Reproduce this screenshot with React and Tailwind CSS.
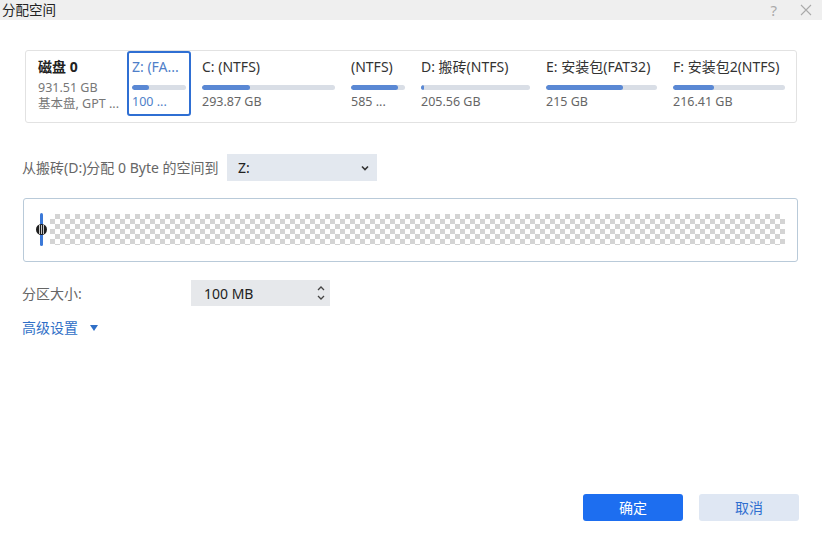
import React from 'react';

const partitions = [
  { name: 'Z: (FA...', size: '100 ...', fill: 31, w: 'w-[64px]', selected: true },
  { name: 'C: (NTFS)', size: '293.87 GB', fill: 36, w: 'w-[143px]' },
  { name: '(NTFS)', size: '585 ...', fill: 87, w: 'w-[64px]' },
  { name: 'D: 搬砖(NTFS)', size: '205.56 GB', fill: 3, w: 'w-[119px]' },
  { name: 'E: 安装包(FAT32)', size: '215 GB', fill: 69, w: 'w-[121px]' },
  { name: 'F: 安装包2(NTFS)', size: '216.41 GB', fill: 37, w: 'w-[122px]' },
];

const PartitionItem = ({ p }) => (
  <div
    className={`${p.w} h-[65px] shrink-0 rounded-[3px] border-2 px-[3px] pt-[4px] ${
      p.selected ? 'border-[#2f6fd3]' : 'border-transparent'
    }`}
  >
    <div
      className={`text-[14px] leading-[20px] whitespace-nowrap overflow-hidden ${
        p.selected ? 'text-[#4f7fc9]' : 'text-[#333]'
      }`}
    >
      {p.name}
    </div>
    <div className="mt-[8px] h-[5px] rounded-full bg-[#d9dee6] overflow-hidden">
      <div className="h-full rounded-full bg-[#5a88d4]" style={{ width: `${p.fill}%` }} />
    </div>
    <div
      className={`mt-[3px] text-[12.5px] leading-[18px] whitespace-nowrap ${
        p.selected ? 'text-[#4f7fc9]' : 'text-[#666]'
      }`}
    >
      {p.size}
    </div>
  </div>
);

export default function App() {
  return (
    <div
      className="w-[822px] h-[540px] bg-white flex flex-col text-[#333]"
      style={{ fontFamily: '"Noto Sans", "Noto Sans CJK SC", sans-serif' }}
    >
      {/* Title bar */}
      <div className="h-[20px] bg-[#efefef] flex items-center justify-between pl-[2px] pr-[7px]">
        <span className="text-[13.5px] leading-[18px] text-[#222]">分配空间</span>
        <div className="flex items-center gap-[23px] text-[#aaa]">
          <span className="text-[15px] leading-[18px]">?</span>
          <svg width="12" height="12" viewBox="0 0 12 12" className="mr-[3px]">
            <path d="M1 1 L11 11 M11 1 L1 11" stroke="#aaa" strokeWidth="1.1" />
          </svg>
        </div>
      </div>

      {/* Disk card */}
      <div className="mt-[30px] ml-[25px] w-[772px] h-[73px] rounded-[3px] border border-[#e2e2e2] flex">
        <div className="w-[101px] shrink-0 pl-[12px] pt-[6px]">
          <div className="text-[14px] leading-[20px] font-bold text-[#222]">磁盘 0</div>
          <div className="text-[12.5px] leading-[16px] text-[#777] mt-[3px]">931.51 GB</div>
          <div className="text-[12.5px] leading-[16px] text-[#777] whitespace-nowrap">基本盘, GPT ...</div>
        </div>
        <div className="flex gap-[6px]">
          {partitions.map((p) => (
            <PartitionItem key={p.name} p={p} />
          ))}
        </div>
      </div>

      {/* Source/target row */}
      <div className="mt-[31px] ml-[22px] flex items-center">
        <span className="text-[14px] text-[#666] w-[205px]">从搬砖(D:)分配 0 Byte 的空间到</span>
        <div className="w-[150px] h-[27px] bg-[#e3e8ef] flex items-center justify-between pl-[11px] pr-[7px]">
          <span className="text-[14px] text-[#222]">Z:</span>
          <svg width="10" height="10" viewBox="0 0 10 10">
            <path d="M2 3.5 L5 6.5 L8 3.5" fill="none" stroke="#333" strokeWidth="1.6" />
          </svg>
        </div>
      </div>

      {/* Slider */}
      <div className="mt-[17px] ml-[23px] w-[775px] h-[64px] rounded-[3px] border border-[#b9cad9] pt-[15px] pl-[26px] pr-[12px]">
        <div className="relative h-[31px] bg-[repeating-conic-gradient(#d4d4d4_0%_25%,#ffffff_0%_50%)] bg-size-[10px_10px]">
          <div className="absolute left-[-10px] top-[-1px] h-[33px] w-[3px] rounded-full bg-[#3b79d8]" />
          <div className="absolute left-[-14px] top-[10px] w-[11px] h-[11px] rounded-full bg-[#1e1e1e] flex items-center justify-center gap-[1px]">
            <div className="w-[1px] h-[9px] bg-[#c8c8c8]" />
            <div className="w-[1px] h-[9px] bg-[#c8c8c8]" />
            <div className="w-[1px] h-[9px] bg-[#c8c8c8]" />
          </div>
        </div>
      </div>

      {/* Partition size */}
      <div className="mt-[18px] ml-[22px] flex items-center">
        <span className="text-[14px] text-[#666] w-[169px]">分区大小:</span>
        <div className="w-[139px] h-[26px] bg-[#e6e8eb] flex items-center justify-between pl-[13px] pr-[4px]">
          <span className="text-[14px] text-[#222]">100 MB</span>
          <svg width="10" height="18" viewBox="0 0 10 18">
            <path d="M2 6 L5 3 L8 6" fill="none" stroke="#444" strokeWidth="1.3" />
            <path d="M2 12 L5 15 L8 12" fill="none" stroke="#444" strokeWidth="1.3" />
          </svg>
        </div>
      </div>

      {/* Advanced */}
      <div className="mt-[11px] ml-[22px] flex items-center gap-[12px]">
        <span className="text-[14px] text-[#2f6fc7]">高级设置</span>
        <svg width="8" height="6" viewBox="0 0 8 6">
          <path d="M0 0 L8 0 L4 6 Z" fill="#2f6fc7" />
        </svg>
      </div>

      <div className="flex-1" />

      {/* Buttons */}
      <div className="flex justify-end gap-[16px] pr-[23px] pb-[19px]">
        <button className="w-[100px] h-[27px] rounded-[3px] bg-[#1d6ef0] text-white text-[14px]">确定</button>
        <button className="w-[100px] h-[27px] rounded-[3px] bg-[#dfe7f3] text-[#2f6fd0] text-[14px]">取消</button>
      </div>
    </div>
  );
}
